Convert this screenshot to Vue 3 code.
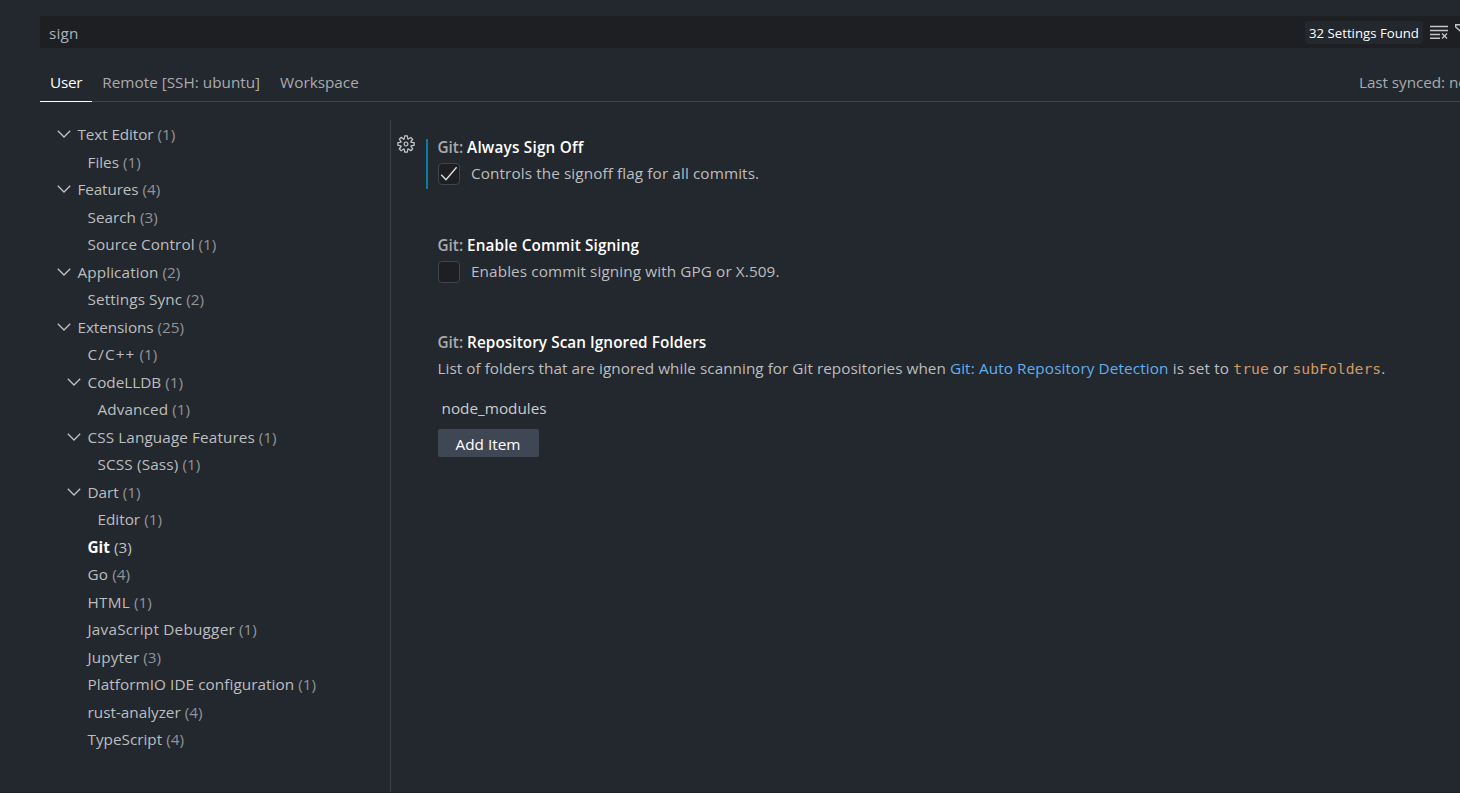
<script setup>
const tree = [
  { label: 'Text Editor', count: 1, level: 0, open: true, tracking: -0.1 },
  { label: 'Files', count: 1, level: 1 },
  { label: 'Features', count: 4, level: 0, open: true, tracking: -0.12 },
  { label: 'Search', count: 3, level: 1 },
  { label: 'Source Control', count: 1, level: 1, tracking: 0.07 },
  { label: 'Application', count: 2, level: 0, open: true, tracking: 0.1 },
  { label: 'Settings Sync', count: 2, level: 1, tracking: 0.1 },
  { label: 'Extensions', count: 25, level: 0, open: true, tracking: -0.1 },
  { label: 'C/C++', count: 1, level: 1, tracking: 1.1 },
  { label: 'CodeLLDB', count: 1, level: 1, open: true },
  { label: 'Advanced', count: 1, level: 2, tracking: 0.1 },
  { label: 'CSS Language Features', count: 1, level: 1, open: true, tracking: 0.1 },
  { label: 'SCSS (Sass)', count: 1, level: 2, tracking: 0.15 },
  { label: 'Dart', count: 1, level: 1, open: true },
  { label: 'Editor', count: 1, level: 2 },
  { label: 'Git', count: 3, level: 1, selected: true },
  { label: 'Go', count: 4, level: 1, tracking: 0.2 },
  { label: 'HTML', count: 1, level: 1, tracking: 0.25 },
  { label: 'JavaScript Debugger', count: 1, level: 1, tracking: 0.22 },
  { label: 'Jupyter', count: 3, level: 1, tracking: 0.15 },
  { label: 'PlatformIO IDE configuration', count: 1, level: 1, tracking: 0.06 },
  { label: 'rust-analyzer', count: 4, level: 1 },
  { label: 'TypeScript', count: 4, level: 1 },
]
</script>

<template>
  <div class="settings">
    <div class="search">
      <span class="query">sign</span>
      <span class="found">32 Settings Found</span>
      <svg class="clear" width="18" height="16" viewBox="0 0 18 16" fill="none" stroke="#c5c5c5" stroke-width="1.4">
        <path d="M0 2.5H18M0 6.5H18M0 10.5H10M0 14.3H10" />
        <path d="M12 9.6l5 5M17 9.6l-5 5" />
      </svg>
      <svg class="filter" width="18" height="18" viewBox="0 0 18 18" fill="none" stroke="#c5c5c5" stroke-width="1.4">
        <path d="M.7 1.7H17V4L11 10V16H7.5V10L.7 4Z" />
      </svg>
    </div>

    <nav class="tabs">
      <span class="tab active">User</span>
      <span class="tab">Remote [SSH: ubuntu]</span>
      <span class="tab">Workspace</span>
      <span class="synced">Last synced: now</span>
    </nav>

    <div class="body">
      <aside class="toc">
        <div
          v-for="item in tree"
          :key="item.label"
          class="row"
          :class="['level-' + item.level, { selected: item.selected }]"
        >
          <span class="twistie">
            <svg v-if="item.open" width="14" height="8" viewBox="0 0 14 8" fill="none" stroke="#c0c3c8" stroke-width="1.3">
              <path d="M.8 .8L7 7L13.2 .8" />
            </svg>
          </span>
          <span class="label" :style="{ letterSpacing: (item.tracking || 0) + 'px' }">{{ item.label }}</span>
          <span class="count">({{ item.count }})</span>
        </div>
      </aside>

      <main class="list">
        <section class="setting first">
          <svg class="gear" width="20" height="20" viewBox="0 0 16 16" fill="#c5c5c5">
            <path fill-rule="evenodd" d="M9.1 4.4L8.6 2H7.4l-.5 2.4-.7.3-2-1.3-.9.8 1.3 2-.2.7-2.4.5v1.2l2.4.5.3.8-1.3 2 .8.8 2-1.3.8.3.4 2.3h1.2l.5-2.4.8-.3 2 1.3.8-.8-1.3-2 .3-.8 2.3-.4V7.4l-2.4-.5-.3-.8 1.3-2-.8-.8-2 1.3-.7-.2zM9.4 1l.5 2.4L12 2.1l2 2-1.4 2.1 2.4.4v2.8l-2.4.5L14 12l-2 2-2.1-1.4-.5 2.4H6.6l-.5-2.4L4 13.9l-2-2 1.4-2.1L1 9.4V6.6l2.4-.5L2.1 4l2-2 2.1 1.4.4-2.4h2.8zm.6 7c0 1.1-.9 2-2 2s-2-.9-2-2 .9-2 2-2 2 .9 2 2zM8 9c.6 0 1-.4 1-1s-.4-1-1-1-1 .4-1 1 .4 1 1 1z" />
          </svg>
          <div class="modified"></div>
          <h3 class="title"><span class="category">Git:</span> <b class="always">Always Sign Off</b></h3>
          <div class="option">
            <span class="checkbox">
              <svg width="18" height="16" viewBox="0 0 18 16" fill="none" stroke="#dddddd" stroke-width="1.4">
                <path d="M1.2 8.7L6 13.8L16.6 1.2" />
              </svg>
            </span>
            <span class="text">Controls the signoff flag for all commits.</span>
          </div>
        </section>

        <section class="setting second">
          <h3 class="title"><span class="category">Git:</span> <b class="enable">Enable Commit Signing</b></h3>
          <div class="option">
            <span class="checkbox"></span>
            <span class="text">Enables commit signing with GPG or X.509.</span>
          </div>
        </section>

        <section class="setting">
          <h3 class="title"><span class="category">Git:</span> <b class="folders">Repository Scan Ignored Folders</b></h3>
          <p class="description">List of folders that are ignored while scanning for Git repositories when <a>Git: Auto Repository Detection</a><span class="tail"> is set to </span><code>true</code> or <code>subFolders</code>.</p>
          <div class="value">node_modules</div>
          <button class="add">Add Item</button>
        </section>
      </main>
    </div>
  </div>
</template>

<style>
body {
  background: #23272e;
  overflow: hidden;
}
</style>

<style scoped>
.settings {
  box-sizing: border-box;
  width: 100vw;
  height: 100vh;
  padding: 16px 0 0 40px;
  display: flex;
  flex-direction: column;
  overflow: hidden;
  background: #23272e;
  border-bottom: 1px solid #1e2227;
  color: #bdbebf;
  font: 15.3px/20px "Segoe UI", "Open Sans", "Noto Sans", sans-serif;
  white-space: nowrap;
}
.search {
  display: flex;
  align-items: center;
  flex: none;
  height: 32px;
  background: #1d1f23;
  border-radius: 2px 0 0 2px;
}
.query {
  margin: 1px auto 0 9px;
  color: #abb2bf;
  letter-spacing: 0.2px;
}
.found {
  box-sizing: border-box;
  flex: none;
  width: 118px;
  height: 23px;
  margin-top: 1px;
  border-radius: 3px;
  background: #23272e;
  color: #fff;
  font-size: 13.2px;
  line-height: 24px;
  text-align: center;
}
.clear {
  flex: none;
  margin: 0 7px;
}
.filter {
  flex: none;
  margin-right: -13px;
}
.tabs {
  display: flex;
  flex: none;
  height: 38px;
  margin-top: 15px;
  border-bottom: 1px solid #3e4452;
  line-height: 39px;
  color: #a9abae;
}
.tab {
  padding: 0 10px;
}
.active {
  height: 38px;
  border-bottom: 1px solid #fff;
  color: #fff;
  letter-spacing: -0.25px;
}
.synced {
  width: 101px;
  margin-left: auto;
  letter-spacing: -0.07px;
  overflow: hidden;
}
.body {
  display: flex;
  flex: 1;
  min-height: 0;
  padding-top: 18px;
}
.toc {
  box-sizing: border-box;
  flex: none;
  width: 351px;
  padding-top: 1px;
  border-right: 1px solid #3a3f4b;
}
.row {
  display: flex;
  align-items: center;
  height: 27.5px;
  line-height: 27px;
}
.level-0 { padding-left: 17px; }
.level-1 { padding-left: 27px; }
.level-2 { padding-left: 37px; }
.twistie {
  display: flex;
  flex: none;
  width: 20.5px;
  margin-top: -1px;
}
.count {
  margin-left: 4px;
  color: #929497;
}
.selected .label {
  color: #fff;
  font-weight: 700;
}
.selected .count { color: #c0c1c3; }
.list {
  flex: 1;
  padding: 16px 0 0 46.5px;
}
.setting { position: relative; }
.first, .second { height: 97.5px; }
.gear {
  position: absolute;
  left: -41.5px;
  top: -2px;
}
.modified {
  position: absolute;
  left: -11.5px;
  top: 3px;
  width: 2px;
  height: 50px;
  background: #0c7d9d;
}
.title {
  margin: 0;
  font-size: inherit;
  font-weight: 600;
  line-height: 22px;
}
.category { color: #a9abae; }
.title b {
  color: #fff;
  font-weight: 600;
}
.always { letter-spacing: 0.2px; }
.enable { letter-spacing: 0.12px; }
.folders { letter-spacing: 0.07px; }
.option {
  display: flex;
  align-items: center;
  gap: 11.5px;
  height: 32px;
}
.text {
  margin-top: -2px;
  letter-spacing: 0.1px;
}
.checkbox {
  display: flex;
  align-items: center;
  justify-content: center;
  box-sizing: border-box;
  width: 22px;
  height: 22px;
  border: 1px solid #3e4452;
  border-radius: 4px;
  background: #1d1f23;
}
.description {
  margin: 5px 0 0;
  letter-spacing: 0.035px;
}
.description a {
  color: #61afef;
  letter-spacing: 0.11px;
}
.tail { letter-spacing: 0.16px; }
code {
  color: #d19a66;
  font: 14.7px/16px "DejaVu Sans Mono", monospace;
}
.value {
  margin: 20px 0 0 4px;
  color: #cccccc;
}
.add {
  width: 101px;
  height: 28px;
  margin-top: 11px;
  padding: 1px 0 0;
  border: 0;
  border-radius: 2px;
  background: #404754;
  color: #fff;
  font: inherit;
}
</style>
